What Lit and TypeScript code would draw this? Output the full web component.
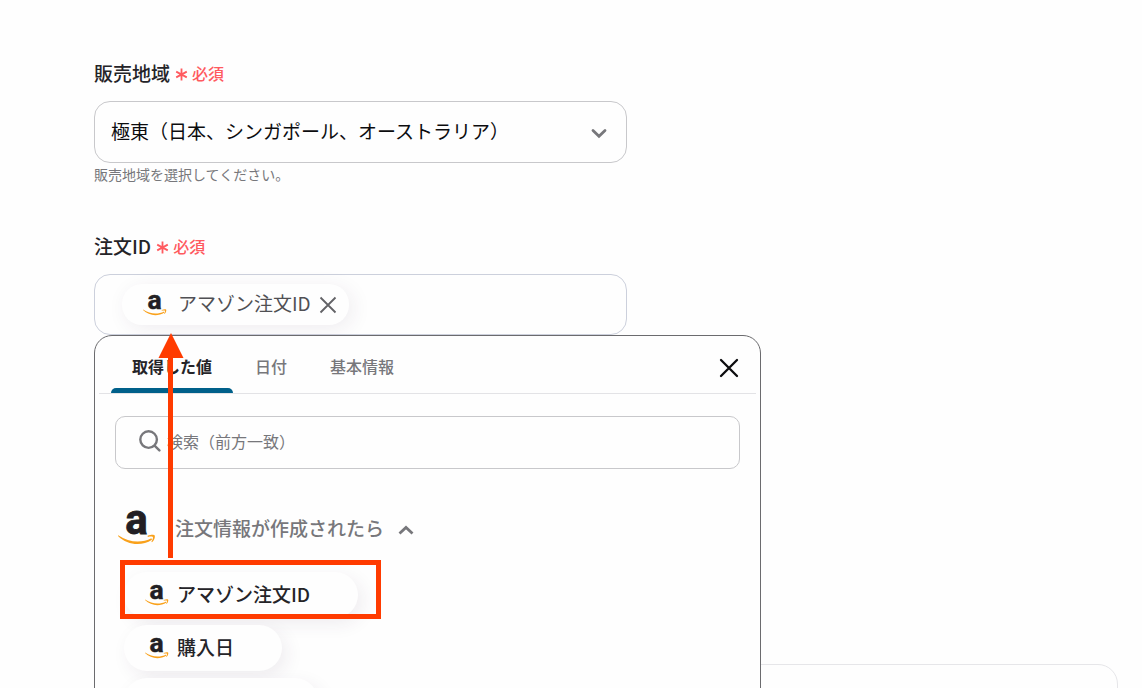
import { LitElement, html, css } from "lit";
import { customElement, property, state } from "lit/decorators.js";

@customElement("shop-logo")
export class ShopLogo extends LitElement {
  static styles = css`
    :host {
      display: block;
      flex: none;
      width: 24px;
      height: 24px;
    }
    :host([large]) {
      width: 38px;
      height: 38px;
    }
    svg {
      display: block;
      width: 100%;
      height: 100%;
      overflow: visible;
    }
    .letter {
      font: 700 42px Roboto, "Liberation Sans", sans-serif;
      fill: #221f24;
      stroke: #221f24;
      stroke-width: 0.8;
    }
  `;

  render() {
    return html`<svg viewBox="0 0 38 38" aria-hidden="true">
      <text class="letter" x="18.4" y="25" text-anchor="middle">a</text>
      <path d="M0.2 26.2C11 33.6 23.5 34.4 33.4 29.2L34 30.8C23.6 37.6 9.5 36.4 0 27Z" fill="#f9a11b" />
      <path d="M29.6 26.8C33 25.4 36 25.4 36.8 26.4C37.2 28.4 36.2 31.4 34 33.2L33.4 32.8C34.6 30.6 35.4 28.6 34.8 28C34 27.4 32 27.6 29.8 28Z" fill="#f9a11b" />
    </svg>`;
  }
}

@customElement("required-mark")
export class RequiredMark extends LitElement {
  static styles = css`
    :host {
      display: inline-flex;
      align-items: center;
      gap: 4px;
      color: #ff5a5f;
      font-size: 16px;
      font-weight: 500;
      line-height: 24px;
    }
    svg {
      width: 13px;
      height: 13px;
      margin-top: 2px;
    }
  `;

  render() {
    return html`<svg viewBox="0 0 13 13" fill="none" stroke="currentColor" stroke-width="1.8" aria-hidden="true">
        <path d="M6.5 0.6V12.4M1.2 3.6L11.8 9.4M11.8 3.6L1.2 9.4" /></svg
      ><span>必須</span>`;
  }
}

@customElement("value-picker")
export class ValuePicker extends LitElement {
  @property({ type: Array }) tabs: string[] = [];
  @property({ type: Array }) values: string[] = [];
  @state() private active = 0;

  static styles = css`
    :host {
      display: block;
      box-sizing: border-box;
      border: 1px solid #6b6b6e;
      border-radius: 18px;
      background: #fefefe;
      padding: 0 4px;
    }
    button {
      font: inherit;
      border: 0;
      background: none;
      padding: 0;
      cursor: pointer;
    }
    .head {
      display: flex;
      align-items: center;
      height: 57px;
      padding: 0 16px 0 12px;
      border-bottom: 1px solid #e3e3e6;
    }
    .tabs {
      display: flex;
      gap: 1px;
      flex: 1;
      align-self: stretch;
    }
    .tab {
      display: grid;
      grid-template-rows: 1fr 5px;
      align-items: center;
      padding: 8px 21px 0;
      font-size: 16px;
      font-weight: 500;
      line-height: 24px;
      color: #77777b;
    }
    .tab.on {
      color: #252428;
      font-weight: 700;
    }
    .tab.on::after {
      content: "";
      height: 5px;
      margin: 0 -21px;
      border-radius: 5px 5px 0 0;
      background: #00608a;
    }
    .close {
      display: block;
      width: 22px;
      height: 22px;
      margin-top: 6px;
    }
    .close svg {
      display: block;
    }
    .search {
      display: flex;
      align-items: center;
      gap: 6px;
      height: 51px;
      margin: 22px 16px 0;
      padding: 0 23px;
      border: 1px solid #c8c8cb;
      border-radius: 10px;
    }
    .search svg {
      flex: none;
      margin-bottom: 4px;
    }
    .search input {
      flex: 1;
      min-width: 0;
      padding: 0 0 4px;
      border: 0;
      outline: 0;
      background: none;
      font: inherit;
      font-size: 16px;
      line-height: 24px;
      color: #252428;
    }
    .search input::placeholder {
      color: #77777b;
      opacity: 1;
    }
    .group {
      display: flex;
      align-items: center;
      height: 38px;
      margin: 40px 19px 0;
      font-size: 19px;
      font-weight: 500;
      color: #77777b;
      gap: 19px;
    }
    .group span {
      padding-bottom: 2px;
    }
    .item span {
      padding-bottom: 4px;
    }
    .group .chevron {
      margin: 4px 0 0 -5px;
    }
    .items {
      list-style: none;
      margin: 25px 0 0;
      padding: 0 25px;
      display: flex;
      flex-direction: column;
      align-items: flex-start;
      gap: 7px;
    }
    .item {
      display: flex;
      align-items: center;
      gap: 8px;
      box-sizing: border-box;
      height: 46px;
      min-width: 158px;
      padding: 0 48px 0 21px;
      border-radius: 23px;
      background: #fefefe;
      box-shadow: 5px 6px 18px rgba(60, 40, 80, 0.08);
      font-size: 19px;
      font-weight: 500;
      color: #252428;
    }
    .item.blank {
      width: 194px;
    }
  `;

  render() {
    return html`
      <div class="head">
        <div class="tabs" role="tablist">
          ${this.tabs.map(
            (t, i) => html`<button
              class="tab ${i === this.active ? "on" : ""}"
              role="tab"
              aria-selected=${i === this.active}
              @click=${() => (this.active = i)}
            >
              <span>${t}</span>
            </button>`
          )}
        </div>
        <button class="close" aria-label="閉じる">
          <svg width="22" height="22" viewBox="0 0 22 22" fill="none" stroke="#0c0c0e" stroke-width="2.3" stroke-linecap="round">
            <path d="M3 3L19 19M19 3L3 19" />
          </svg>
        </button>
      </div>
      <label class="search">
        <svg width="22" height="22" viewBox="0 0 22 22" fill="none" stroke="#77777b" stroke-width="2.4" stroke-linecap="round" aria-hidden="true">
          <circle cx="9.6" cy="9.6" r="8.3" />
          <path d="M15.8 15.8L20.4 20.4" />
        </svg>
        <input type="text" placeholder="検索（前方一致）" aria-label="検索" />
      </label>
      <button class="group" aria-expanded="true">
        <shop-logo large></shop-logo>
        <span>注文情報が作成されたら</span>
        <svg class="chevron" width="16" height="10" viewBox="0 0 16 10" fill="none" stroke="#77777b" stroke-width="2.8" aria-hidden="true">
          <path d="M1.5 8.5L8 2.5L14.5 8.5" />
        </svg>
      </button>
      <ul class="items">
        ${this.values.map(
          (v) => html`<li>
            ${v
              ? html`<button class="item"><shop-logo></shop-logo><span>${v}</span></button>`
              : html`<div class="item blank"></div>`}
          </li>`
        )}
      </ul>
    `;
  }
}

@customElement("app-root")
export class AppRoot extends LitElement {
  @state() private chips = ["アマゾン注文ID"];

  static styles = css`
    :host {
      display: block;
      box-sizing: border-box;
      height: 100vh;
      overflow: hidden;
      position: relative;
      padding: 59px 24px 0 94px;
      background: #fefefe;
      color: #252428;
      font-family: "Noto Sans CJK JP", "Noto Sans", sans-serif;
    }
    .field {
      max-width: 533px;
    }
    .field + .field {
      margin-top: 47px;
    }
    .label {
      display: flex;
      align-items: center;
      gap: 5px;
      font-size: 19px;
      font-weight: 500;
      line-height: 28px;
    }
    .control {
      position: relative;
      margin-top: 14px;
    }
    select {
      display: block;
      appearance: none;
      box-sizing: border-box;
      width: 100%;
      height: 62px;
      padding: 0 48px 4px 16px;
      border: 1px solid #c8c8cb;
      border-radius: 16px;
      background: #fefefe;
      color: #0c0c0e;
      font: inherit;
      font-size: 19px;
    }
    .caret {
      position: absolute;
      right: 20px;
      top: 27px;
      pointer-events: none;
    }
    .hint {
      margin: 0;
      font-size: 14px;
      line-height: 22px;
      color: #77777b;
    }
    .tokens {
      display: flex;
      align-items: center;
      box-sizing: border-box;
      height: 61px;
      padding: 0 27px;
      border: 1px solid #ccd0dc;
      border-radius: 16px;
    }
    .token {
      display: flex;
      align-items: center;
      gap: 11px;
      height: 41px;
      padding: 0 12px 0 21px;
      border-radius: 20px;
      background: #fefefe;
      box-shadow: 4px 4px 20px rgba(60, 40, 80, 0.08);
      font-size: 19px;
      color: #505054;
    }
    .token span {
      padding-bottom: 4px;
    }
    .token button {
      display: block;
      margin-left: -3px;
      padding: 0;
      border: 0;
      background: none;
      cursor: pointer;
    }
    .token svg {
      display: block;
    }
    .tokens input {
      flex: 1;
      min-width: 0;
      border: 0;
      outline: 0;
      background: none;
      font: inherit;
    }
    value-picker {
      position: absolute;
      left: 0;
      top: 100%;
      width: 667px;
      z-index: 1;
    }
    .next {
      height: 200px;
      margin-top: 329px;
      border: 1px solid #e6e6e9;
      border-radius: 20px;
    }
    .frame {
      position: absolute;
      z-index: 2;
      left: 120px;
      top: 560px;
      box-sizing: border-box;
      width: 261px;
      height: 59px;
      border: 5px solid #ff3b00;
      pointer-events: none;
    }
    .arrow {
      position: absolute;
      z-index: 2;
      left: 158px;
      top: 333px;
      pointer-events: none;
    }
  `;

  render() {
    return html`
      <div class="field">
        <label class="label" for="region">販売地域<required-mark></required-mark></label>
        <div class="control">
          <select id="region">
            <option>極東（日本、シンガポール、オーストラリア）</option>
          </select>
          <svg class="caret" width="16" height="11" viewBox="0 0 16 11" fill="none" stroke="#77777b" stroke-width="2.8" stroke-linecap="round" aria-hidden="true">
            <path d="M2 2.5L8 8.3L14 2.5" />
          </svg>
        </div>
        <p class="hint">販売地域を選択してください。</p>
      </div>
      <div class="field">
        <label class="label" for="order">注文ID<required-mark></required-mark></label>
        <div class="control">
          <div class="tokens">
            ${this.chips.map(
              (c) => html`<span class="token">
                <shop-logo></shop-logo><span>${c}</span>
                <button aria-label="削除" @click=${() => (this.chips = [])}>
                  <svg width="18" height="18" viewBox="0 0 18 18" fill="none" stroke="#626266" stroke-width="1.8">
                    <path d="M1.5 1.5L16.5 16.5M16.5 1.5L1.5 16.5" />
                  </svg>
                </button>
              </span>`
            )}
            <input id="order" type="text" />
          </div>
          <value-picker
            .tabs=${["取得した値", "日付", "基本情報"]}
            .values=${["アマゾン注文ID", "購入日", ""]}
          ></value-picker>
        </div>
      </div>
      <div class="next"></div>
      <div class="frame"></div>
      <svg class="arrow" width="26" height="225" viewBox="0 0 26 225" fill="#ff3b00" aria-hidden="true">
        <path d="M13 0L25.5 25H15V225H10V25H0.5Z" />
      </svg>
    `;
  }
}
